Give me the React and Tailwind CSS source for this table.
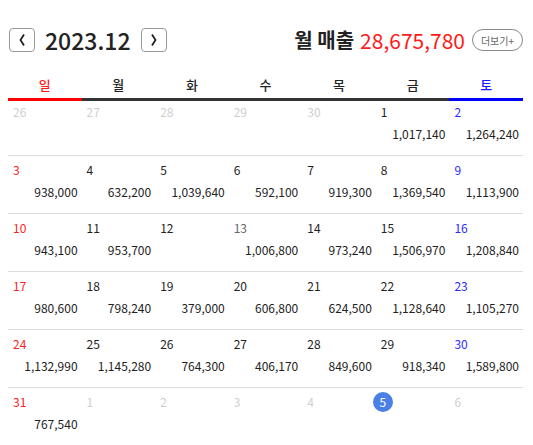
import React from "react";

const FONT = { fontFamily: '"Noto Sans CJK KR", "Noto Sans", sans-serif' };

const WEEKDAYS = ["일", "월", "화", "수", "목", "금", "토"];

// [day, amount, muted]
const WEEKS = [
  [[26, null, true], [27, null, true], [28, null, true], [29, null, true], [30, null, true], [1, "1,017,140"], [2, "1,264,240"]],
  [[3, "938,000"], [4, "632,200"], [5, "1,039,640"], [6, "592,100"], [7, "919,300"], [8, "1,369,540"], [9, "1,113,900"]],
  [[10, "943,100"], [11, "953,700"], [12, null], [13, "1,006,800"], [14, "973,240"], [15, "1,506,970"], [16, "1,208,840"]],
  [[17, "980,600"], [18, "798,240"], [19, "379,000"], [20, "606,800"], [21, "624,500"], [22, "1,128,640"], [23, "1,105,270"]],
  [[24, "1,132,990"], [25, "1,145,280"], [26, "764,300"], [27, "406,170"], [28, "849,600"], [29, "918,340"], [30, "1,589,800"]],
  [[31, "767,540"], [1, null, true], [2, null, true], [3, null, true], [4, null, true], [5, null, true, true], [6, null, true]],
];

function Arrow({ dir }) {
  return (
    <button
      type="button"
      className="w-[26px] h-[24px] border border-[#9a9a9a] rounded-[4px] flex items-center justify-center bg-white"
    >
      <svg width="8" height="14" viewBox="0 0 8 14">
        <path
          d={dir === "left" ? "M6 1.5 L2.5 7 L6 12.5" : "M2 1.5 L5.5 7 L2 12.5"}
          fill="none"
          stroke="#222"
          strokeWidth="1.8"
        />
      </svg>
    </button>
  );
}

function dayColor(col, day, muted) {
  if (muted) return "text-[#cfcfcf]";
  if (col === 0) return "text-[#ff2020]";
  if (col === 6) return "text-[#2a2aff]";
  if (day === 13) return "text-[#666]";
  return "text-[#222]";
}

function App() {
  return (
    <div className="w-[533px] h-[445px] bg-white overflow-hidden" style={FONT}>
      <div className="flex items-center justify-between pl-[9px] pr-[10px] pt-[28px]">
        <div className="flex items-center gap-[10px]">
          <Arrow dir="left" />
          <span className="text-[23px] leading-[24px] font-medium text-[#222]">2023.12</span>
          <Arrow dir="right" />
        </div>
        <div className="flex items-center">
          <span className="text-[20px] leading-[24px] font-bold text-[#222]">월 매출</span>
          <span className="ml-[6px] text-[21px] leading-[24px] text-[#ff1a1a]">28,675,780</span>
          <button
            type="button"
            className="ml-[7px] w-[51px] h-[22px] border border-[#8a8a8a] rounded-full text-[10px] text-[#666] flex items-center justify-center"
          >
            더보기+
          </button>
        </div>
      </div>

      <div className="ml-[8px] mr-[10px] mt-[24px]">
        <div className="grid grid-cols-7">
          {WEEKDAYS.map((w, i) => (
            <div
              key={w}
              className={`text-center text-[13px] font-medium leading-[18px] pb-[4px] border-b-[3px] ${
                i === 0
                  ? "text-[#ff1a1a] border-[#ff0000]"
                  : i === 6
                  ? "text-[#1a1aff] border-[#0000ff]"
                  : "text-[#222] border-[#333]"
              }`}
            >
              {w}
            </div>
          ))}
        </div>

        {WEEKS.map((week, r) => (
          <div
            key={r}
            className={`grid grid-cols-7 border-b border-[#dcdcdc] ${r === 0 ? "h-[55px]" : "h-[58px]"}`}
          >
            {week.map(([day, amount, muted, today], c) => (
              <div key={c} className={`flex flex-col ${r === 0 ? "pt-[2px]" : "pt-[5px]"}`}>
                <div className="h-[18px] pl-[5px] flex items-center">
                  {today ? (
                    <span className="-ml-[8px] w-[20px] h-[20px] rounded-full bg-[#4a80e6] text-white text-[12px] flex items-center justify-center">
                      {day}
                    </span>
                  ) : (
                    <span className={`text-[12px] leading-[18px] ${dayColor(c, day, muted)}`}>{day}</span>
                  )}
                </div>
                {amount && (
                  <div className="mt-[5px] pr-[4px] text-right text-[12px] leading-[16px] text-[#222]">
                    {amount}
                  </div>
                )}
              </div>
            ))}
          </div>
        ))}
      </div>
    </div>
  );
}

export default App;
